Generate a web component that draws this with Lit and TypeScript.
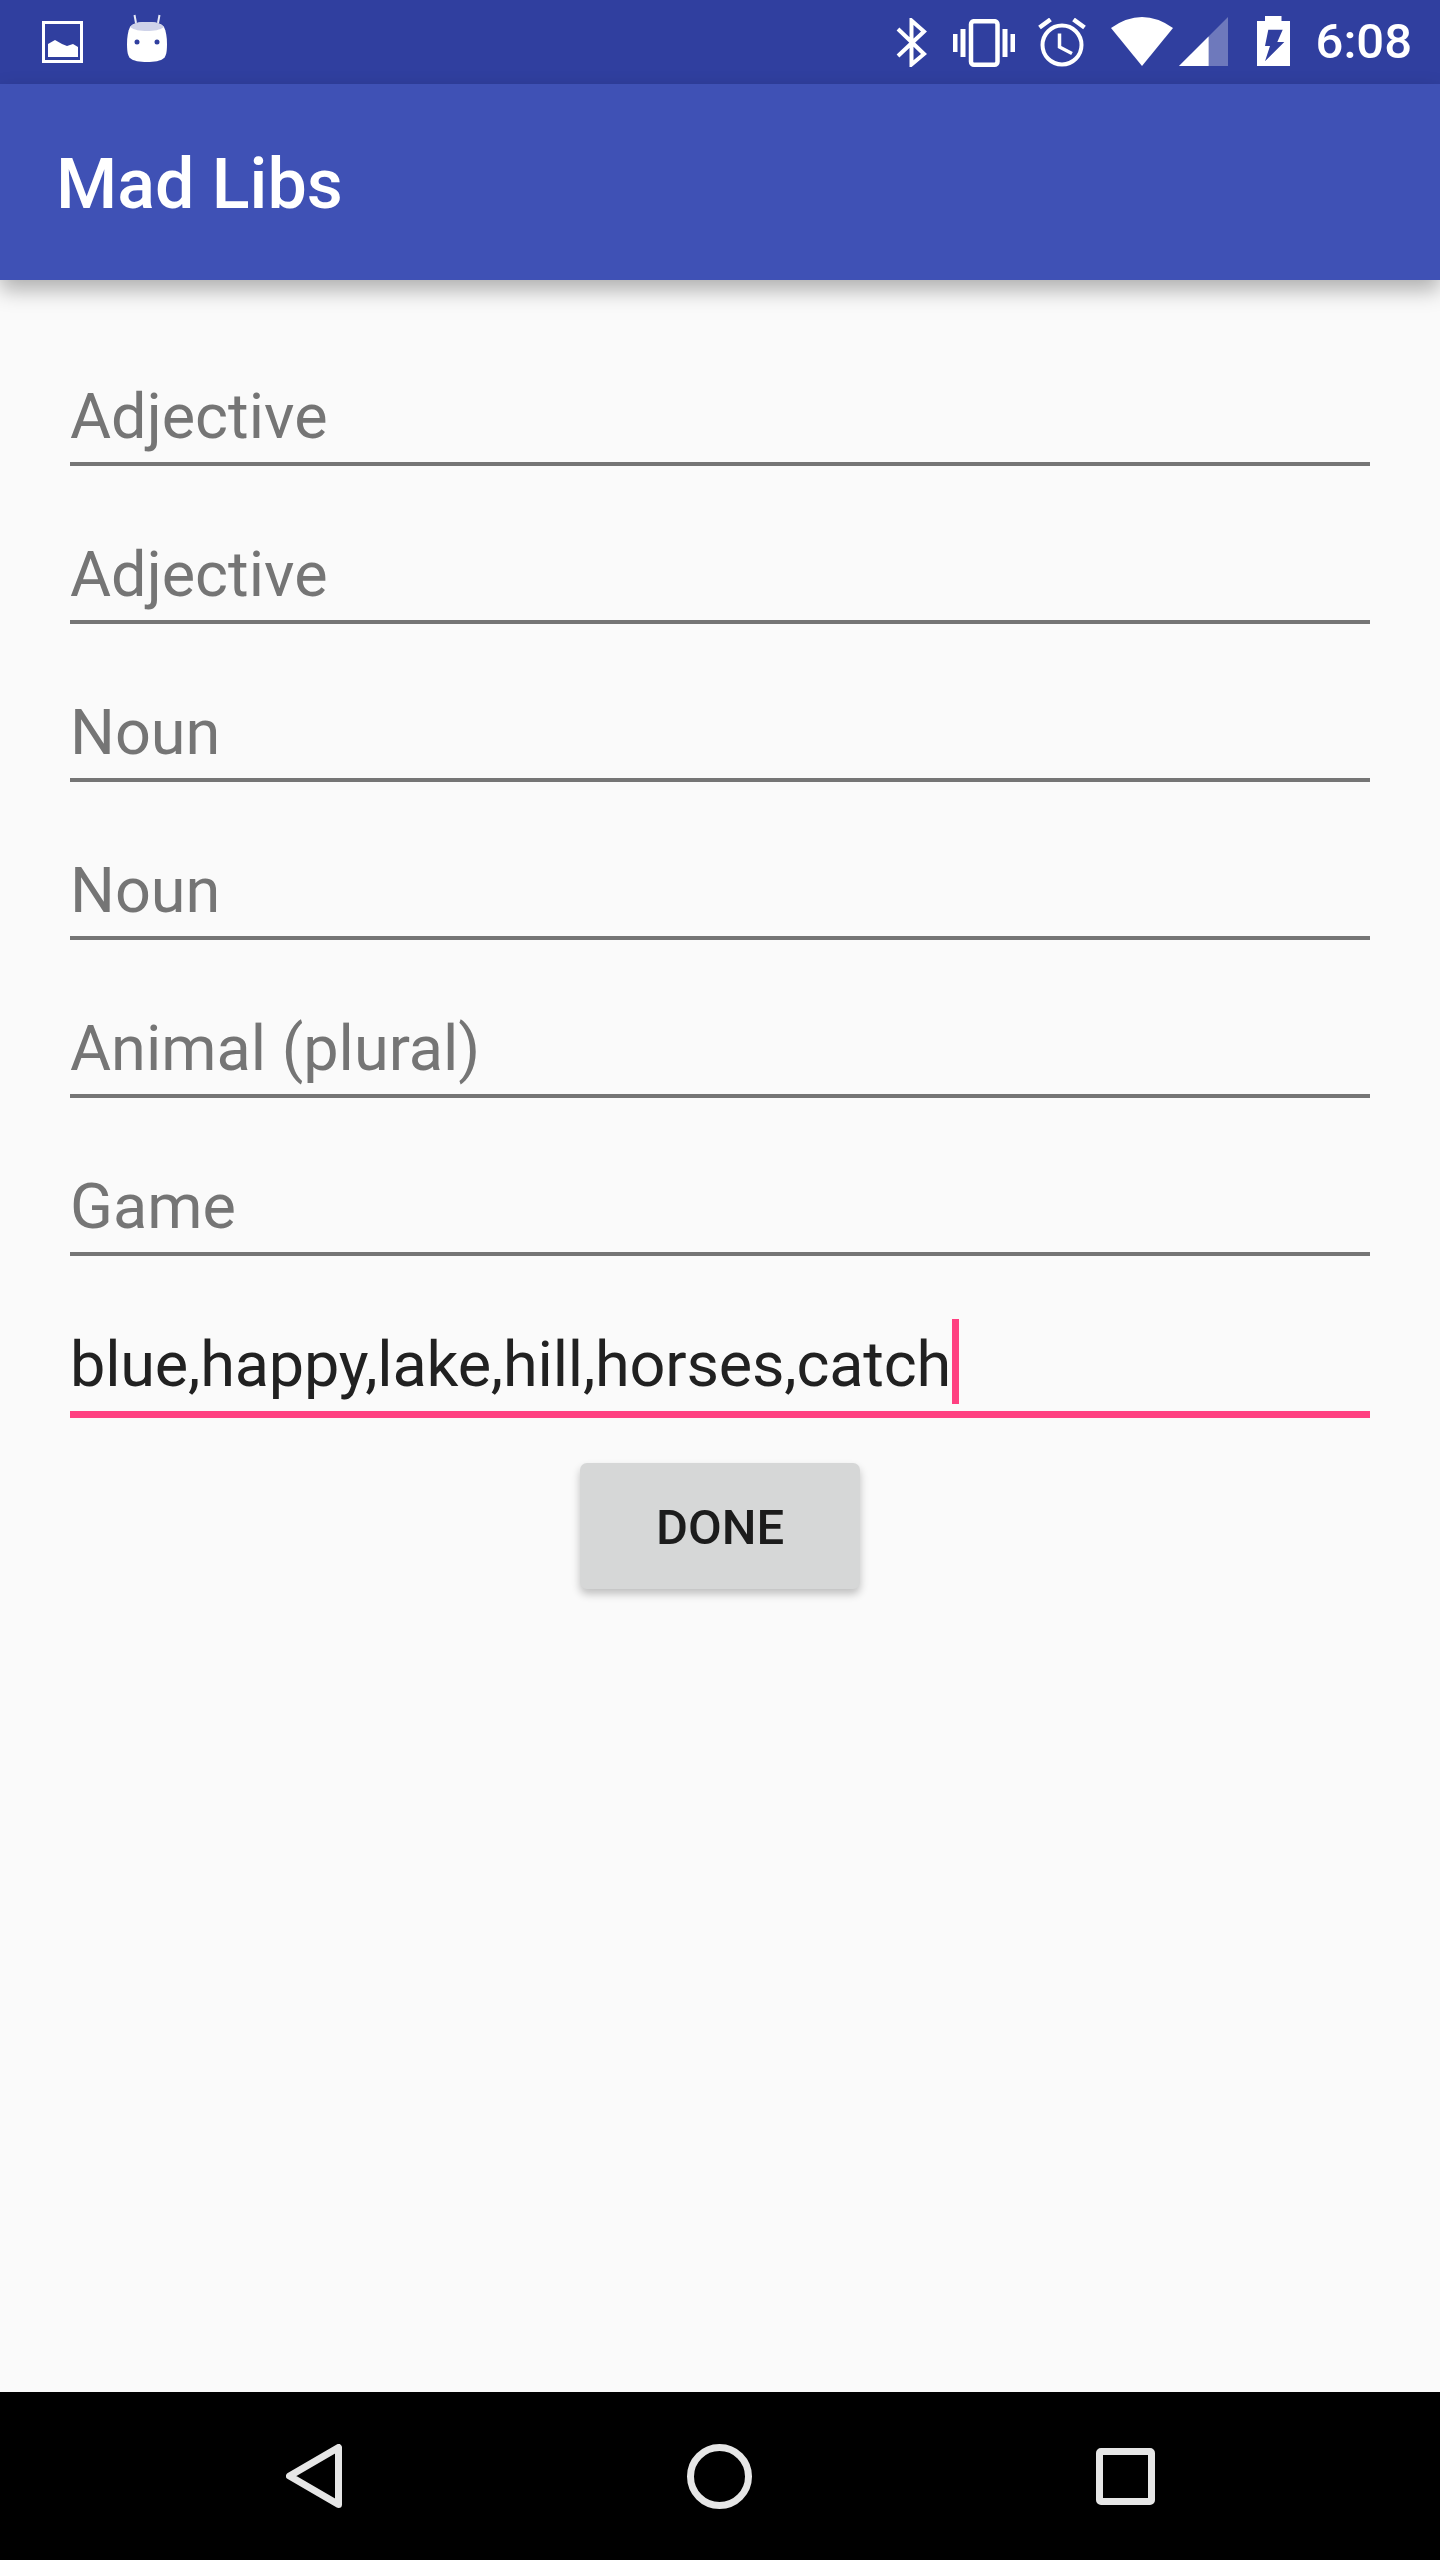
import { LitElement, html, css, svg } from "lit";
import { customElement } from "lit/decorators.js";

const HINTS = ["Adjective", "Adjective", "Noun", "Noun", "Animal (plural)", "Game"];

@customElement("app-root")
export class AppRoot extends LitElement {
  static styles = css`
    :host {
      display: flex;
      flex-direction: column;
      height: 2560px;
      background: #fafafa;
      font-family: Roboto, "Noto Sans", sans-serif;
    }
    svg {
      display: block;
      flex: none;
    }

    .status {
      flex: none;
      height: 84px;
      box-sizing: border-box;
      background: #303f9f;
      display: flex;
      align-items: flex-start;
      color: #fff;
    }
    .status .image { margin: 21px 0 0 42px; }
    .status .droid { margin: 14px 0 0 44px; }
    .status .spacer { flex: 1; }
    .status .bt { margin: 18px 0 0 0; }
    .status .vib { margin: 19px 0 0 26px; }
    .status .alarm { margin: 18px 0 0 23px; }
    .status .wifi { margin: 17px 0 0 25px; }
    .status .signal { margin: 17px 0 0 6px; }
    .status .battery { margin: 16px 0 0 29px; }
    .clock {
      margin: 0 28px 0 26px;
      font-size: 49px;
      font-weight: 500;
      line-height: 84px;
    }

    .toolbar {
      flex: none;
      height: 196px;
      box-sizing: border-box;
      background: #3f51b5;
      color: #fff;
      padding: 5px 0 0 56px;
      font-size: 70px;
      font-weight: 500;
      line-height: 191px;
      box-shadow: 0 10px 20px rgba(0, 0, 0, 0.3);
      position: relative;
    }

    main {
      flex: 1;
      display: flex;
      flex-direction: column;
      padding: 28px 70px 0;
    }
    .field {
      height: 158px;
      box-sizing: border-box;
      border-bottom: 4px solid #757575;
      display: flex;
      align-items: flex-end;
      padding-bottom: 8px;
      font-size: 63px;
      line-height: 74px;
      color: #757575;
    }
    .field.active {
      height: 162px;
      border-bottom: 7px solid #ff4081;
      color: #212121;
      padding-bottom: 7px;
      letter-spacing: -0.2px;
    }
    .field.active span {
      margin-bottom: 2px;
    }
    .caret {
      flex: none;
      width: 7px;
      height: 85px;
      margin-left: 1px;
      background: #ff4081;
    }
    button {
      align-self: center;
      margin-top: 45px;
      width: 280px;
      height: 126px;
      padding: 3px 0 0;
      border: 0;
      border-radius: 7px;
      background: #d6d7d7;
      color: #1c1c1c;
      font: 500 49px Roboto, "Noto Sans", sans-serif;
      box-shadow: 0 5px 8px rgba(0, 0, 0, 0.24);
    }

    .nav {
      flex: none;
      height: 168px;
      background: #000;
      display: flex;
      align-items: center;
      justify-content: center;
    }
    .nav .back { margin-left: 0; }
    .nav .home { margin-left: 345px; }
    .nav .recent { margin-left: 344px; }
  `;

  render() {
    return html`
      <div class="status">
        <svg class="image" width="41" height="42" viewBox="0 0 41 42">
          <rect x="1.500" y="1.500" width="38" height="39" fill="none" stroke="#fff" stroke-width="3" />
          <path d="M6 36V23l7-4 7 4 5 2 6-2 5 3v10z" fill="#fff" />
        </svg>
        <svg class="droid" width="40" height="48" viewBox="0 0 40 48">
          <path d="M9 9 7.500 1M31 9l1.500-8" stroke="#e8eaf6" stroke-width="2" />
          <path
            d="M3 13C6 9 12 8 20 8s14 1 17 5c2 4 3 10 3 17 0 8-1 12-3 14-3 3-10 4-17 4s-14-1-17-4C1 42 0 38 0 30c0-7 1-13 3-17z"
            fill="#fff"
          />
          <path d="M3 13C6 9 12 8 20 8s14 1 17 5c-4 3-10 4-17 4S7 16 3 13z" fill="#cfd3e9" />
          <circle cx="10" cy="28" r="2.500" fill="#303f9f" />
          <circle cx="30" cy="28" r="2.500" fill="#303f9f" />
        </svg>
        <div class="spacer"></div>
        <svg class="bt" width="31" height="49" viewBox="0 0 31 49">
          <path d="M2 11 28 36 15.500 46.500V2.500L28 13.500 2 38" fill="none" stroke="#fff" stroke-width="4" />
        </svg>
        <svg class="vib" width="62" height="48" viewBox="0 0 62 48">
          <rect x="18" y="2.200" width="26.500" height="43.500" rx="3" fill="none" stroke="#fff" stroke-width="4.500" />
          <path d="M0 15h4.500v18H0zM7.500 10h5v28h-5zM49.500 10h5v28h-5zM57.500 15H62v18h-4.500z" fill="#fff" />
        </svg>
        <svg class="alarm" width="48" height="49" viewBox="0 0 48 49">
          <circle cx="24" cy="27" r="19.500" fill="none" stroke="#fff" stroke-width="4" />
          <path d="M21.500 15.500V29L34 35.500" fill="none" stroke="#fff" stroke-width="3.500" />
          <path d="M1.500 9.500 12.500 1.500M46.500 9.500 35.500 1.500" fill="none" stroke="#fff" stroke-width="4.500" />
        </svg>
        <svg class="wifi" width="62" height="49" viewBox="0 0 62 49">
          <path d="M0 11Q31-11 62 11L31 49z" fill="#fff" />
        </svg>
        <svg class="signal" width="49" height="49" viewBox="0 0 49 49">
          <path d="M0 49 49 0V49z" fill="#fff" fill-opacity="0.3" />
          <path d="M0 49 29.600 19.400V49z" fill="#fff" />
        </svg>
        <svg class="battery" width="33" height="50" viewBox="0 0 33 50">
          <path
            fill-rule="evenodd"
            fill="#fff"
            d="M8 0h16.500v5H33v45H0V5h8zM11.300 13.700H25.700L20.300 26H27.300L8 45.300 13 30H8z"
          />
        </svg>
        <div class="clock">6:08</div>
      </div>
      <div class="toolbar">Mad Libs</div>
      <main>
        ${HINTS.map((hint) => html`<div class="field">${hint}</div>`)}
        <div class="field active"><span>blue,happy,lake,hill,horses,catch</span><div class="caret"></div></div>
        <button>DONE</button>
      </main>
      <div class="nav">${this.navIcons()}</div>
    `;
  }

  navIcons() {
    return html`
      <svg class="back" width="56" height="64" viewBox="0 0 56 64">
        ${svg`<path d="M52.500 3.500V60.500L3.500 32z" fill="none" stroke="#e6e6e6" stroke-width="7" stroke-linejoin="round" />`}
      </svg>
      <svg class="home" width="65" height="65" viewBox="0 0 65 65">
        <circle cx="32.500" cy="32.500" r="29" fill="none" stroke="#e6e6e6" stroke-width="7" />
      </svg>
      <svg class="recent" width="59" height="57" viewBox="0 0 59 57">
        <rect x="3.500" y="3.500" width="52" height="50" rx="1.500" fill="none" stroke="#e6e6e6" stroke-width="7" />
      </svg>
    `;
  }
}
